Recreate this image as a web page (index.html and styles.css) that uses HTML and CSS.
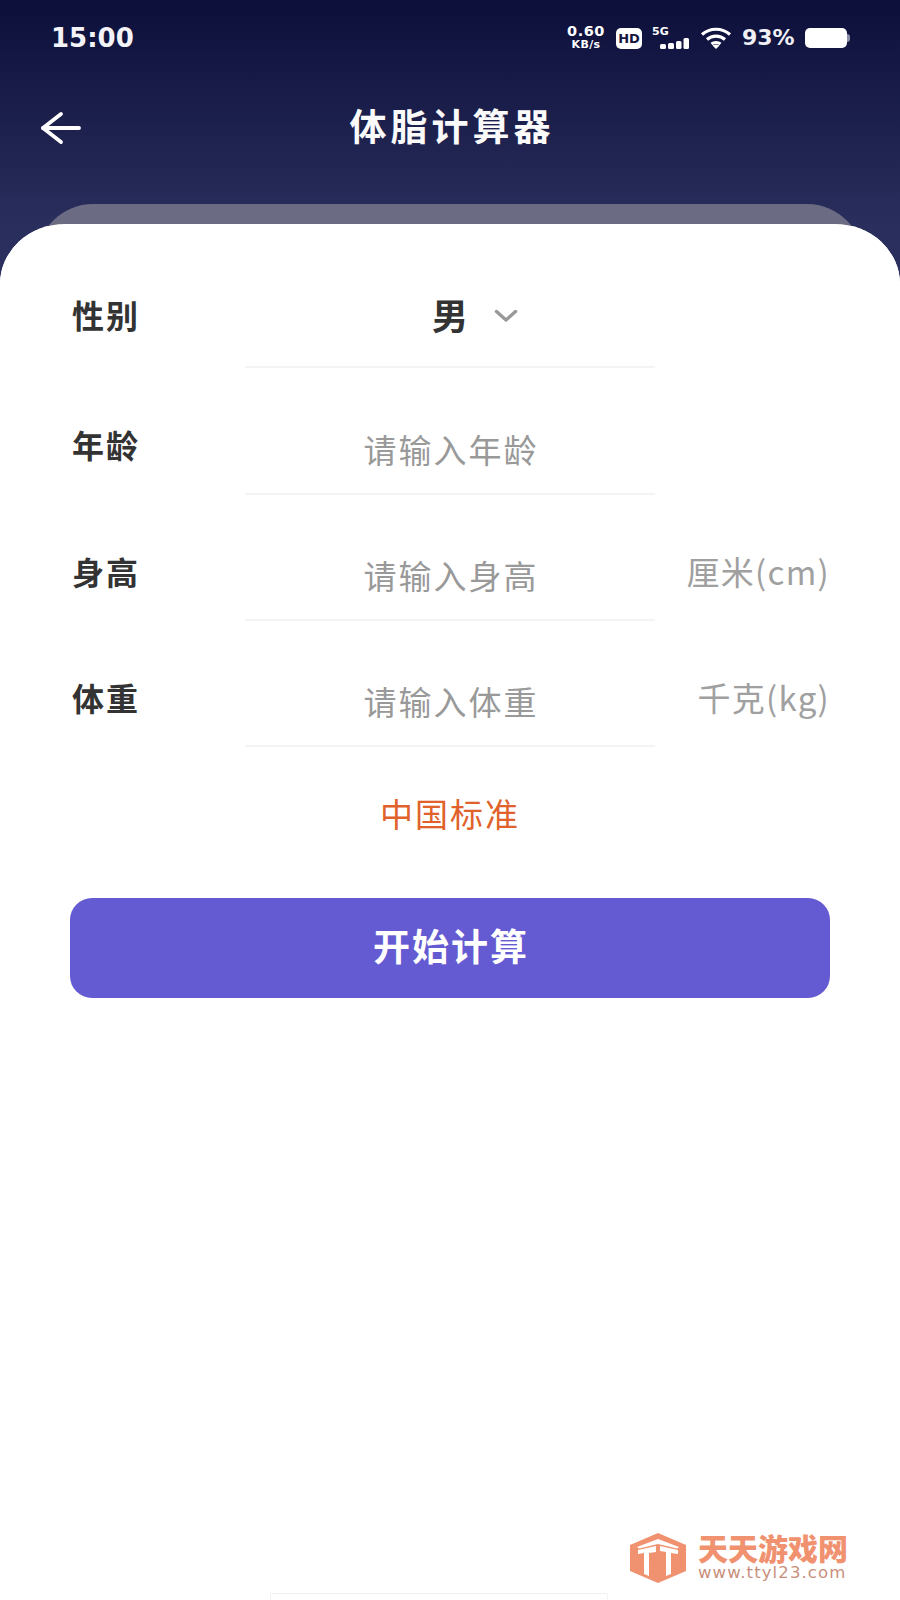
FILE: index.html
```html
<!DOCTYPE html>
<html lang="zh-CN">
<head>
<meta charset="utf-8">
<title>体脂计算器</title>
<link rel="stylesheet" href="styles.css">
</head>
<body>
<div class="page">
  <header class="header">
    <div class="status">
      <span class="time">15:00</span>
      <div class="status-icons">
        <span class="speed"><b>0.60</b><b class="speed-unit">KB/s</b></span>
        <span class="hd">HD</span>
        <span class="signal">
          <span class="sig-label">5G</span>
          <svg class="sig-bars" width="29" height="11" viewBox="0 0 29 11"><rect x="0" y="6" width="6" height="5" rx="1.500"/><rect x="8" y="5" width="6" height="6" rx="1.500"/><rect x="16" y="3" width="5.500" height="8" rx="1.500"/><rect x="23.500" y="0" width="5.500" height="11" rx="1.500"/></svg>
        </span>
        <svg class="wifi" width="32" height="22" viewBox="0 0 32 22" fill="none" stroke="#fff" stroke-width="3.200"><path d="M2 7.500C10 .5 22 .5 30 7.500"/><path d="M7 12.500C12 8 20 8 25 12.500"/><path d="M11.500 17C14 15 18 15 20.500 17"/><path d="M16 22l-3.500-3.500c2-1.200 5-1.200 7 0z" fill="#fff" stroke="none"/></svg>
        <span class="pct">93%</span>
        <span class="battery"></span>
      </div>
    </div>
    <div class="nav">
      <svg class="back" width="42" height="34" viewBox="0 0 42 34" fill="none" stroke="#fff" stroke-width="3.800" stroke-linecap="round" stroke-linejoin="round"><path d="M3 17H39"/><path d="M21 3L3 17 21 31"/></svg>
      <h1 class="title">体脂计算器</h1>
    </div>
  </header>

  <main class="card">
    <form class="form">
      <div class="row row-first">
        <span class="label label-first">性别</span>
        <div class="field field-select"><span class="gender">男</span>
          <svg class="chev" width="24" height="14" viewBox="0 0 24 14" fill="none" stroke="#999" stroke-width="3.400" stroke-linecap="round" stroke-linejoin="round"><path d="M2.500 2.500L12 11 21.500 2.500"/></svg>
        </div>
      </div>
      <div class="row row-second">
        <span class="label">年龄</span>
        <div class="field"><span class="placeholder">请输入年龄</span></div>
      </div>
      <div class="row">
        <span class="label">身高</span>
        <div class="field"><span class="placeholder">请输入身高</span></div>
        <span class="unit">厘米(cm)</span>
      </div>
      <div class="row">
        <span class="label">体重</span>
        <div class="field"><span class="placeholder">请输入体重</span></div>
        <span class="unit">千克(kg)</span>
      </div>
    </form>
    <p class="standard">中国标准</p>
    <button class="submit" type="button">开始计算</button>
  </main>

  <div class="watermark">
    <svg class="wm-icon" width="60" height="50" viewBox="0 0 60 50"><path fill="#f0916f" d="M30 0L58 12V38L30 50 2 38V12Z"/><path fill="#fff" d="M9 14L30 6 51 14 49 15.500 30 11 11 15.500ZM10 17L28 13V19L21 20V43L16 41V20L10 21ZM32 13L50 17V21L43 20V41L38 43V19L32 18Z"/></svg>
    <div class="wm-text">
      <span class="wm-name">天天游戏网</span>
      <span class="wm-url">www.ttyl23.com</span>
    </div>
  </div>
  <div class="home-bar"></div>
</div>
</body>
</html>
```
FILE: styles.css
```css
* { box-sizing: border-box; }
html, body { margin: 0; padding: 0; background: #fff; }
body { font-family: "Noto Sans CJK SC", "Noto Sans", sans-serif; }
.page { position: relative; width: 900px; height: 1600px; overflow: hidden; background: #fff; }

.header {
  height: 290px;
  background: linear-gradient(180deg, #0c0f3a 0%, #2a2e5c 77%, #2c3060 100%);
  color: #fff;
  padding: 0 48px 0 40px;
}
.status { display: flex; align-items: center; justify-content: space-between; height: 76px; padding-left: 11px; }
.time { font-family: "DejaVu Sans", sans-serif; font-size: 26px; font-weight: 700; letter-spacing: 0; color: #f4f4f8; }
.status-icons { display: flex; align-items: center; margin-right: -1px; }
.speed { display: flex; flex-direction: column; align-items: center; width: 40px; font-family: "DejaVu Sans", sans-serif; }
.speed b { font-size: 14.500px; letter-spacing: .5px; line-height: 13px; }
.speed .speed-unit { font-size: 11px; line-height: 13px; letter-spacing: .4px; }
.hd {
  margin-left: 10px; width: 26px; height: 21px; border-radius: 5px; background: #fff; color: #14163f;
  font: 700 13px/21px "DejaVu Sans", sans-serif; text-align: center; white-space: nowrap;
}
.signal { position: relative; display: block; width: 37px; height: 22px; margin-left: 10px; }
.sig-label { position: absolute; left: 0; top: -1px; font: 700 11px/12px "DejaVu Sans", sans-serif; }
.sig-bars { position: absolute; right: 0; bottom: 0; fill: #fff; }
.wifi { margin-left: 11px; }
.pct { margin-left: 10px; width: 54px; font: 700 22px/1 "DejaVu Sans", sans-serif; white-space: nowrap; color: #f0f0f5; }
.battery { position: relative; display: block; width: 42px; height: 20px; margin-left: 9px; margin-right: 6px; border-radius: 5px; background: #fff; }
.battery::after { content: ""; position: absolute; right: -3px; top: 6px; width: 3px; height: 8px; border-radius: 0 3px 3px 0; background: #8f90a8; }

.nav { position: relative; display: flex; align-items: center; justify-content: center; height: 50px; margin: 26px -8px 0 0; }
.back { position: absolute; left: 0; top: 9px; }
.title { margin: 0 -4px 0 0; font-size: 37px; font-weight: 700; line-height: 50px; letter-spacing: 4px; color: #fafafa; position: relative; top: -2px; }

.card {
  position: relative;
  height: 1376px;
  margin-top: -66px;
  background: #fff;
  border-radius: 65px 65px 0 0 / 60px 60px 0 0;
  padding: 0 70px;
}
.card::before {
  content: "";
  position: absolute;
  left: 36px; right: 36px; top: -20px; height: 80px;
  background: #6b6c84;
  border-radius: 57px 57px 0 0 / 58px 58px 0 0;
}
.card::after {
  content: "";
  position: absolute;
  left: 0; right: 0; top: 0; height: 90px;
  background: #fff;
  border-radius: 65px 65px 0 0 / 60px 60px 0 0;
}
.form { position: relative; z-index: 1; }
.row { display: grid; grid-template-columns: 175px 410px 1fr; height: 126px; }
.row-first { height: 144px; }
.row-second { height: 127px; }
.label { font-size: 32px; font-weight: 700; line-height: 40px; letter-spacing: 2px; color: #333; padding: 56px 0 0 2px; height: 96px; white-space: nowrap; }
.label-first { padding-top: 70px; height: 110px; }
.field { border-bottom: 2px solid #f4f4f4; display: flex; justify-content: center; align-items: flex-end; padding-bottom: 24px; }
.field-select { align-items: flex-start; padding: 67px 0 0 0; }
.gender { font-size: 36px; font-weight: 700; line-height: 46px; color: #333; }
.chev { margin: 18px -50px 0 26px; flex: none; }
.placeholder { font-size: 33px; line-height: 40px; color: #999; letter-spacing: 2px; margin-right: -2px; white-space: nowrap; }
.unit { font-size: 33px; line-height: 40px; color: #a0a0a0; text-align: right; padding-top: 56px; letter-spacing: 1.300px; white-space: nowrap; }
.standard { position: relative; z-index: 1; margin: 46px 0 0; text-align: center; font-size: 33px; line-height: 40px; letter-spacing: 2px; color: #e0622a; }
.submit {
  position: relative; z-index: 1;
  display: block; width: 760px; height: 100px; margin: 65px 0 0; border: 0; border-radius: 22px; padding: 0 0 6px 2px;
  background: #645ad2; color: #fff; font-family: inherit; font-size: 37px; font-weight: 700; letter-spacing: 2px;
}

.watermark { position: absolute; left: 628px; top: 1533px; display: flex; align-items: center; gap: 10px; }
.wm-text { display: flex; flex-direction: column; }
.wm-name { font-size: 30px; font-weight: 900; line-height: 24px; letter-spacing: 0; white-space: nowrap; color: #f0916f; }
.wm-url { margin-top: 6px; font-family: "DejaVu Sans", sans-serif; font-size: 16.500px; line-height: 16px; letter-spacing: 1.100px; white-space: nowrap; color: #c98f7c; }
.home-bar { position: absolute; left: 270px; top: 1593px; width: 338px; height: 7px; border: 1px solid #f2f2f2; border-bottom: 0; border-radius: 2px 2px 0 0; }
```
